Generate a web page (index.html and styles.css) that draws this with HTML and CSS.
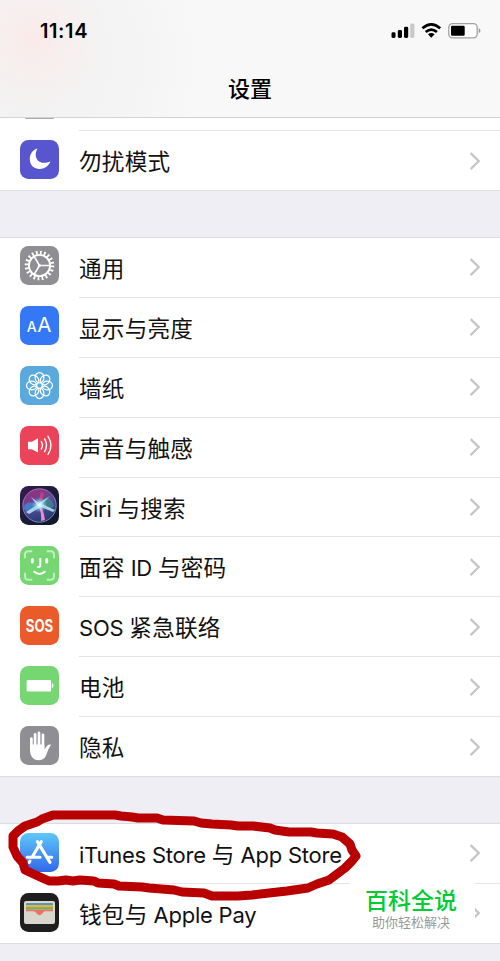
FILE: index.html
```html
<!DOCTYPE html>
<html lang="zh-CN">
<head>
  <meta charset="UTF-8">
  <meta name="viewport" content="width=device-width, initial-scale=1.0">
  <title>设置</title>
  <link rel="stylesheet" href="styles.css">
</head>
<body>
  <svg width="0" height="0" class="defs">
    <defs>
      <symbol id="chevron" viewBox="0 0 12 20"><path d="M1.6 2.1 9.8 10.1 1.6 18.1" fill="none" stroke="#c5c5ca" stroke-width="2.2"/></symbol>
    </defs>
  </svg>
  <header>
    <div class="status">
      <span class="time">11:14</span>
      <svg class="signal" width="92" height="18" viewBox="0 0 92 18">
        <rect x="1.5" y="10.3" width="4" height="5.7" rx="1.4"/>
        <rect x="7.8" y="8" width="4.2" height="8" rx="1.4"/>
        <rect x="14" y="4.8" width="4.2" height="11.2" rx="1.4"/>
        <rect x="20.2" y="1.6" width="4.2" height="14.4" rx="1.4" fill="#c9c9c9"/>
        <g fill="none" stroke="#000" stroke-width="2.7">
          <path d="M32.4 6.3Q41.3-1.6 50.2 6.3"/>
          <path d="M35.7 10Q41.3 5.2 46.9 10"/>
        </g>
        <path d="M38 12.2Q41.3 9.6 44.6 12.2L41.3 15.7Z"/>
        <rect x="58.8" y="1.6" width="28.4" height="14.2" rx="3.8" fill="#fff" stroke="#a0a0a0" stroke-width="1.3"/>
        <rect x="61" y="3.8" width="13.7" height="9.9" rx="1.3"/>
        <path d="M88.7 6Q92.3 8.7 88.7 11.4Z" fill="#999"/>
      </svg>
    </div>
    <h1>设置</h1>
  </header>

  <main>
    <div class="group first">
      <div class="peek"><i></i></div>
      <div class="row">
        <svg class="icon" viewBox="0 0 39 39">
          <rect width="39" height="39" rx="8.5" fill="#5856ce"/>
          <path d="M17.5 8.4C7.9 10.8 7.6 24.6 15.2 28C21 30.7 28 27.6 30.4 21.5C19.7 26.2 12 18 17.5 8.4Z" fill="#fff"/>
        </svg>
        <div class="cell"><span>勿扰模式</span><svg class="chev"><use href="#chevron"/></svg></div>
      </div>
    </div>

    <div class="group">
      <div class="row">
        <svg class="icon" viewBox="0 0 39 39">
          <rect width="39" height="39" rx="8.5" fill="#8e8e93"/>
          <g fill="none" stroke="#fff">
            <circle cx="19.5" cy="19.5" r="12.9" stroke-width="3.8" stroke-dasharray="1.8 2.253"/>
            <circle cx="19.5" cy="19.5" r="10.6" stroke-width="1.9"/>
            <path d="M19.5 19.5H30M19.5 19.5 14.1 10.4M19.5 19.5 14.1 28.6" stroke-width="1.6"/>
          </g>
          <circle cx="19.5" cy="19.5" r="1.6" fill="#fff"/>
        </svg>
        <div class="cell"><span>通用</span><svg class="chev"><use href="#chevron"/></svg></div>
      </div>
      <div class="row">
        <svg class="icon" viewBox="0 0 39 39">
          <rect width="39" height="39" rx="8.5" fill="#3478f6"/>
          <text x="6.7" y="25.6" class="aa small">A</text>
          <text x="17.2" y="26.2" class="aa">A</text>
        </svg>
        <div class="cell"><span>显示与亮度</span><svg class="chev"><use href="#chevron"/></svg></div>
      </div>
      <div class="row">
        <svg class="icon" viewBox="0 0 39 39">
          <rect width="39" height="39" rx="8.5" fill="#5aa9dc"/>
          <g fill="none" stroke="#fff" stroke-width="1.25">
            <ellipse cx="19.5" cy="11.7" rx="4.4" ry="5.2"/>
            <ellipse cx="19.5" cy="11.7" rx="4.4" ry="5.2" transform="rotate(45 19.5 19.5)"/>
            <ellipse cx="19.5" cy="11.7" rx="4.4" ry="5.2" transform="rotate(90 19.5 19.5)"/>
            <ellipse cx="19.5" cy="11.7" rx="4.4" ry="5.2" transform="rotate(135 19.5 19.5)"/>
            <ellipse cx="19.5" cy="11.7" rx="4.4" ry="5.2" transform="rotate(180 19.5 19.5)"/>
            <ellipse cx="19.5" cy="11.7" rx="4.4" ry="5.2" transform="rotate(225 19.5 19.5)"/>
            <ellipse cx="19.5" cy="11.7" rx="4.4" ry="5.2" transform="rotate(270 19.5 19.5)"/>
            <ellipse cx="19.5" cy="11.7" rx="4.4" ry="5.2" transform="rotate(315 19.5 19.5)"/>
          </g>
        </svg>
        <div class="cell"><span>墙纸</span><svg class="chev"><use href="#chevron"/></svg></div>
      </div>
      <div class="row">
        <svg class="icon" viewBox="0 0 39 39">
          <rect width="39" height="39" rx="8.5" fill="#eb445a"/>
          <path d="M8 15.8H11.8L18 12.2V26.4L11.8 23.3H8Z" fill="#fff"/>
          <g fill="none" stroke="#fff" stroke-width="1.4" stroke-linecap="round">
            <path d="M21.3 15.6Q23.7 19.3 21.3 23"/>
            <path d="M24.6 12.9Q28.5 19.3 24.6 25.7"/>
            <path d="M28 10.3Q34 19.3 28 28.3"/>
          </g>
        </svg>
        <div class="cell"><span>声音与触感</span><svg class="chev"><use href="#chevron"/></svg></div>
      </div>
      <div class="row">
        <svg class="icon" viewBox="0 0 39 39">
          <defs>
            <linearGradient id="siribg" x1="0" y1="0" x2="1" y2="1"><stop offset="0" stop-color="#391a53"/><stop offset=".5" stop-color="#1d1b3c"/><stop offset="1" stop-color="#10182b"/></linearGradient>
            <linearGradient id="orb" x1=".3" y1="0" x2=".7" y2="1"><stop offset="0" stop-color="#a02a78"/><stop offset=".45" stop-color="#5b4a9e"/><stop offset="1" stop-color="#183b6c"/></linearGradient>
            <radialGradient id="glow"><stop offset="0" stop-color="#fff"/><stop offset=".35" stop-color="#bdf2ff" stop-opacity=".75"/><stop offset="1" stop-color="#5bbdf0" stop-opacity="0"/></radialGradient>
          </defs>
          <rect width="39" height="39" rx="8.5" fill="url(#siribg)"/>
          <circle cx="19.5" cy="19.5" r="16.7" fill="url(#orb)" stroke="#8b8fae" stroke-width=".9"/>
          <path d="M19 19C25 8 32 12 34 20C30 24 24 23 19 19Z" fill="#3e9a8c" opacity=".65"/>
          <path d="M17 19C10 14 4 17 4 22C5 26 9 27 17 19Z" fill="#389ce0" opacity=".6"/>
          <path d="M18 18 21 5 24 8 21 18Z" fill="#df4275" opacity=".7"/>
          <path d="M18 19Q22 27 21 35L25 34Q24 25 20 18Z" fill="#f386c6"/>
          <path d="M19 17 30 10 22 18 35 24 33 26 21 21 9 28 6 26 17 19 11 11Z" fill="#b7edf3" opacity=".85"/>
          <circle cx="19.5" cy="19" r="8" fill="url(#glow)"/>
        </svg>
        <div class="cell"><span><b>Siri </b>与搜索</span><svg class="chev"><use href="#chevron"/></svg></div>
      </div>
      <div class="row">
        <svg class="icon" viewBox="0 0 39 39">
          <rect width="39" height="39" rx="8.5" fill="#75d672"/>
          <path d="M5 12.3V8.5Q5 5.2 8.5 5.2H12.3M26.7 5.2H30.5Q34 5.2 34 8.5V12.3M34 26.7V30.5Q34 33.8 30.5 33.8H26.7M12.3 33.8H8.5Q5 33.8 5 30.5V26.7" fill="none" stroke="#c3eec0" stroke-width="1.9"/>
          <g fill="none" stroke="#fff" stroke-linecap="round">
            <path d="M12.3 13.4V16M26.7 13.4V16" stroke-width="3"/>
            <path d="M20.3 12.8V19.2Q20.3 21.3 18 21.1" stroke-width="2"/>
            <path d="M14.3 25.8Q19.5 30.2 24.7 25.8" stroke-width="2.1"/>
          </g>
        </svg>
        <div class="cell"><span>面容<b> ID </b>与密码</span><svg class="chev"><use href="#chevron"/></svg></div>
      </div>
      <div class="row">
        <svg class="icon" viewBox="0 0 39 39">
          <rect width="39" height="39" rx="8.5" fill="#eb5a29"/>
          <text x="5.7" y="25.9" class="sos" textLength="27.6" lengthAdjust="spacingAndGlyphs">SOS</text>
        </svg>
        <div class="cell"><span><b>SOS </b>紧急联络</span><svg class="chev"><use href="#chevron"/></svg></div>
      </div>
      <div class="row">
        <svg class="icon" viewBox="0 0 39 39">
          <rect width="39" height="39" rx="8.5" fill="#75d672"/>
          <rect x="6.6" y="14" width="24.4" height="11.4" rx="1" fill="#fff"/>
          <path d="M31.9 16.8Q35.2 19.7 31.9 22.4Z" fill="#fff"/>
        </svg>
        <div class="cell"><span>电池</span><svg class="chev"><use href="#chevron"/></svg></div>
      </div>
      <div class="row">
        <svg class="icon" viewBox="0 0 39 39">
          <rect width="39" height="39" rx="8.5" fill="#8e8e93"/>
          <g stroke="#fff" stroke-width="2.7" stroke-linecap="round">
            <path d="M11.4 12.5V24M15.1 8.3V22M19 6.8V22M23 8.8V22"/>
          </g>
          <path d="M10.1 18.5H24.3V23.5L27.4 19.4Q29 17.8 31.1 18.8Q28.6 22.2 27 27C25.5 32 22.8 34.2 18.7 34.2C12.8 34.2 10.1 30 10.1 24Z" fill="#fff"/>
        </svg>
        <div class="cell"><span>隐私</span><svg class="chev"><use href="#chevron"/></svg></div>
      </div>
    </div>

    <div class="group stores">
      <div class="row">
        <svg class="icon" viewBox="0 0 39 39">
          <defs><linearGradient id="store" x2="0" y2="1"><stop offset="0" stop-color="#5fc7f9"/><stop offset="1" stop-color="#3068ea"/></linearGradient></defs>
          <rect width="39" height="39" rx="8.5" fill="url(#store)"/>
          <g stroke="#fff" stroke-width="3.1" stroke-linecap="round">
            <path d="M21.3 8.6 12.3 23.8M17.4 8.6 30 29.4M7.3 24.3H20M26.8 24.3H31.7M10 28.1 9.2 29.4"/>
          </g>
        </svg>
        <div class="cell"><span><b>iTunes Store </b>与<b> App Store</b></span><svg class="chev"><use href="#chevron"/></svg></div>
      </div>
      <div class="row">
        <svg class="icon" viewBox="0 0 39 39">
          <rect width="39" height="39" rx="8.5" fill="#1e1e1f"/>
          <rect x="4" y="8" width="31" height="23" rx="2" fill="#d9d6cc"/>
          <path d="M6 12V11Q6 10 7 10H32Q33 10 33 11V12Z" fill="#5596c3"/>
          <path d="M6 12H33V14.2H6Z" fill="#edb13b"/>
          <path d="M6 14.2H33V16.4H6Z" fill="#68b657"/>
          <path d="M6 16.4H33V18.2H25Q23.8 18.2 23 19.7Q19.5 24.6 16 19.7Q15.2 18.2 14 18.2H6Z" fill="#e87563"/>
        </svg>
        <div class="cell"><span>钱包与<b> Apple Pay</b></span><svg class="chev"><use href="#chevron"/></svg></div>
      </div>
    </div>
  </main>

  <div class="watermark">
    <strong>百科全说</strong>
    <small>助你轻松解决</small>
  </div>
  <svg class="marker" width="370" height="100" viewBox="0 805 370 100">
    <path d="M53 815 115 815 121 816 132 817 138 818 157 818 163 820 194 821 201 823 212 824 231 825 238 826 253 826 270 828 275 830 289 832 311 832 317 833 333 834 342 837 350 844 352 850 356 856 352 861 345 868 337 874 329 880 317 884 308 888 301 889 287 891 269 893 252 895 238 896 212 896 204 893 182 892 174 890 149 888 142 887 119 886 114 884 98 883 94 881 80 880 73 881 66 880 58 881 49 881 40 877 25 870 23 863 17 856 13 847 13 836 18 831 25 826 37 822 42 819Z"/>
  </svg>
</body>
</html>
```
FILE: styles.css
```css
* {
  box-sizing: border-box;
}
body {
  margin: 0;
  width: 500px;
  height: 961px;
  overflow: hidden;
  position: relative;
  background: #efeef4;
  color: #111;
  font-family: Inter, "Noto Sans CJK SC", sans-serif;
}
.defs {
  position: absolute;
}
header {
  height: 118px;
  border-bottom: 1px solid #d3d3d5;
  background:
    radial-gradient(circle at 34px 38px, rgba(253, 232, 231, .8) 0, rgba(251, 236, 235, .5) 30px, rgba(246, 242, 242, 0) 75px),
    radial-gradient(circle at 30px 60px, #f2f1f1 0, #f3f3f3 80px, rgba(248, 248, 248, 0) 170px),
    #f8f8f8;
}
.status {
  display: flex;
  justify-content: space-between;
  padding: 19px 18px 0 40px;
  height: 60px;
}
.time {
  font-size: 20px;
  line-height: 24px;
  font-weight: 600;
  letter-spacing: .6px;
  color: #000;
}
.signal {
  margin-top: 3px;
}
h1 {
  margin: 14px 0 0;
  font-size: 22px;
  line-height: 30px;
  font-weight: 500;
  text-align: center;
  color: #000;
}
.group {
  background: #fff;
  border-top: 1px solid #dddce1;
  border-bottom: 1px solid #dddce1;
  margin-bottom: 46px;
}
.first {
  border-top: 0;
}
.peek {
  height: 12px;
  padding-left: 25px;
}
.peek i {
  display: block;
  width: 29px;
  height: 1px;
  background: #aaa;
  border-radius: 0 0 8px 8px;
}
.row {
  display: flex;
  height: 59.9px;
  padding-left: 20px;
}
.group .row:last-child {
  height: 58.8px;
}
.first .row:last-child {
  height: 60px;
}
.icon {
  width: 39px;
  height: 39px;
  margin: 8.45px 20px 0 0;
  flex: none;
}
.row:last-child .icon {
  margin-top: 9px;
}
.first .row .icon {
  margin-top: 10px;
}
.stores .icon {
  margin-top: 9px;
}
.cell {
  flex: 1;
  display: flex;
  align-items: center;
  justify-content: space-between;
  padding-right: 19.5px;
  border-bottom: 1px solid #e4e4e6;
}
.row:last-child .cell {
  border-bottom: 0;
}
.first .cell {
  border-top: 1px solid #e4e4e6;
}
.cell span {
  font-size: 22.6px;
  line-height: 30px;
  padding-top: 3px;
  letter-spacing: .25px;
  white-space: nowrap;
}
.cell b {
  font-size: 22px;
  font-weight: 400;
  letter-spacing: -.23px;
}
.chev {
  width: 12px;
  height: 20px;
}
.aa {
  font-family: Inter, sans-serif;
  font-size: 20.5px;
  fill: #fff;
}
.aa.small {
  font-size: 14px;
  font-weight: 500;
}
.sos {
  font-family: Inter, sans-serif;
  font-size: 17.5px;
  font-weight: 700;
  fill: #fff;
}
.watermark {
  position: absolute;
  left: 350px;
  top: 880px;
  width: 125px;
  height: 58px;
  background: #fff;
  display: flex;
  flex-direction: column;
  align-items: center;
  padding: 7px 3px 0 0;
}
.watermark strong {
  font-size: 23px;
  line-height: 28px;
  font-weight: 500;
  color: #0c3;
}
.watermark small {
  font-size: 13px;
  line-height: 15px;
  color: #999;
}
.marker {
  position: absolute;
  left: 0;
  top: 805px;
}
.marker path {
  fill: none;
  stroke: #b90000;
  stroke-width: 9;
  stroke-linejoin: round;
}
```
